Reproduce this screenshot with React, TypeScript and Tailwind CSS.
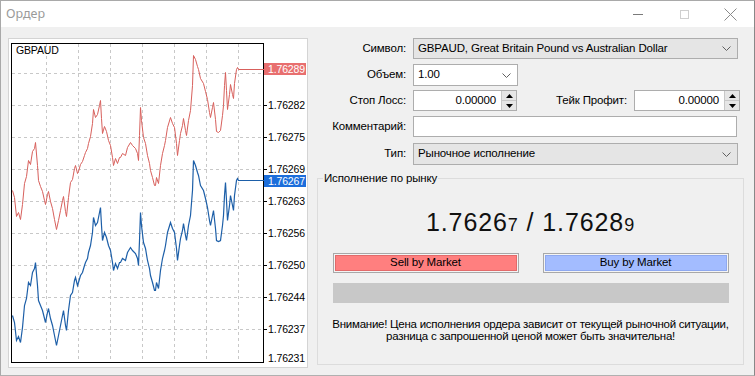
import React from "react";

const bluePts: [number, number][] = [
  [12,315],[14,322],[16,340],[18,336],[20,342],[22,327],[24,305],[26,298],[28,282],[30,285],[32,272],[34,268],[35,262],[37,285],[38,300],[40,305],[42,310],[44,318],[45,322],[47,312],[48,308],[50,318],[52,325],[54,335],[56,345],[58,335],[60,325],[62,315],[63,310],[65,325],[66,330],[68,310],[70,295],[72,292],[74,280],[75,277],[77,285],[78,282],[80,275],[82,272],[84,265],[85,262],[87,258],[88,252],[90,245],[92,232],[93,217],[95,225],[97,222],[99,212],[100,207],[101,225],[102,240],[104,232],[106,237],[108,245],[110,250],[112,262],[113,270],[115,263],[117,268],[119,262],[120,262],[122,258],[125,260],[127,252],[130,247],[132,250],[135,253],[137,258],[138,265],[139,240],[140,212],[141,225],[143,242],[145,248],[147,260],[149,268],[150,275],[152,282],[154,290],[155,290],[156,282],[158,288],[160,270],[162,258],[164,250],[165,245],[167,232],[170,222],[172,228],[174,232],[176,248],[177,260],[179,245],[180,238],[182,230],[183,223],[185,235],[186,240],[188,225],[190,215],[192,190],[193,160],[195,165],[197,172],[198,175],[200,185],[203,190],[205,198],[207,207],[209,220],[210,225],[212,215],[213,210],[215,228],[216,240],[218,241],[220,240],[222,225],[223,215],[224,195],[225,182],[226,200],[227,220],[229,205],[230,195],[232,205],[233,210],[234,195],[236,180],[237,178],[238,180],[264,180]
];

function toPath(pts: [number, number][], dy: (x: number) => number) {
  return pts.map((p, i) => `${i === 0 ? "M" : "L"}${p[0] + 0.5} ${Math.round(p[1] + dy(p[0])) + 0.5}`).join(" ");
}

const redOffset = (x: number) => {
  if (x < 60) return -125 + (x - 12) * (10 / 48);
  if (x < 110) return -115 + (x - 60) * (10 / 50);
  if (x < 190) return -105;
  if (x < 236) return -105 - (x - 190) * (7 / 46);
  return -111;
};

const gridY = [73, 105, 137, 169, 201, 233, 265, 297, 329];
const gridX = [46, 78, 110, 142, 174, 206, 238];
const labels: [number, string][] = [
  [105, "1.76282"], [137, "1.76275"], [169, "1.76269"], [201, "1.76263"],
  [233, "1.76256"], [265, "1.76250"], [297, "1.76244"], [329, "1.76237"], [358, "1.76231"],
];

function Chart() {
  return (
    <div className="w-[300px] h-[330px] shrink-0 bg-white border border-[#d4d4d4]">
      <svg width="298" height="328" viewBox="9 39 298 328" style={{ fontFamily: "'Liberation Sans', Arial, sans-serif" }}>
        {gridX.map((x) => (
          <line key={x} x1={x + 0.5} y1={44} x2={x + 0.5} y2={362} stroke="#c8c8c8" strokeDasharray="3 3" />
        ))}
        {gridY.map((y) => (
          <line key={y} x1={12} y1={y + 0.5} x2={263} y2={y + 0.5} stroke="#c8c8c8" strokeDasharray="3 3" />
        ))}
        {gridY.map((y) => (
          <line key={"t" + y} x1={264} y1={y + 0.5} x2={267} y2={y + 0.5} stroke="#000" />
        ))}
        <rect x={11.5} y={43.5} width={252} height={319} fill="none" stroke="#000" />
        <path d={toPath(bluePts, redOffset)} fill="none" stroke="#d8605c" strokeWidth={1} />
        <path d={toPath(bluePts, () => 0)} fill="none" stroke="#1d5fa8" strokeWidth={1.2} />
        {labels.map(([y, t]) => (
          <text key={t} x={268} y={y + 4} fontSize={10.5} fill="#000">{t}</text>
        ))}
        <rect x={264} y={63} width={42} height={12} fill="#e86f6f" />
        <text x={268} y={73} fontSize={10.5} fill="#fff">1.76289</text>
        <rect x={264} y={175} width={42} height={12} fill="#1c6edb" />
        <text x={268} y={185} fontSize={10.5} fill="#fff">1.76267</text>
        <text x={16} y={54} fontSize={10.5} fill="#000">GBPAUD</text>
      </svg>
    </div>
  );
}

function Chevron() {
  return (
    <svg width="9" height="5" viewBox="0 0 9 5" className="shrink-0">
      <path d="M0.5 0.5 L4.5 4.5 L8.5 0.5" fill="none" stroke="#606060" strokeWidth="1" />
    </svg>
  );
}

function Spinner() {
  return (
    <div className="w-[15px] h-full shrink-0 flex flex-col border-l border-[#c8c8c8] bg-[#f0f0f0]">
      <div className="flex-1 flex items-center justify-center border-b border-[#c8c8c8] bg-[#e6e6e6]">
        <svg width="7" height="4" viewBox="0 0 7 4"><path d="M0 4 L3.5 0 L7 4 Z" fill="#000" /></svg>
      </div>
      <div className="flex-1 flex items-center justify-center bg-[#e6e6e6]">
        <svg width="7" height="4" viewBox="0 0 7 4"><path d="M0 0 L3.5 4 L7 0 Z" fill="#000" /></svg>
      </div>
    </div>
  );
}

function Label({ children }: { children: React.ReactNode }) {
  return <div className="w-[96px] shrink-0 text-right whitespace-nowrap">{children}</div>;
}

export default function App() {
  return (
    <div className="w-[755px] h-[376px] overflow-hidden bg-[#f0f0f0] text-[11.5px] tracking-[-0.15px] text-[#000] font-['Liberation_Sans',Arial,sans-serif] flex flex-col border-t border-l border-[#a9a9a9] border-r border-r-[#888] border-b border-b-[#b0b0b0]">
      <div className="h-[26px] shrink-0 bg-white flex items-center">
        <div className="pl-[5px] text-[#9a9a9a] text-[12.5px] tracking-normal font-['Noto_Sans',sans-serif]">Ордер</div>
        <div className="ml-auto flex items-center h-full">
          <div className="w-[46px] h-full flex items-center justify-center">
            <div className="w-[10px] h-[1px] bg-[#7a7a7a]" />
          </div>
          <div className="w-[46px] h-full flex items-center justify-center">
            <div className="w-[9px] h-[9px] border border-[#cfcfcf]" />
          </div>
          <div className="w-[46px] h-full flex items-center justify-center mr-[1px]">
            <svg width="13" height="13" viewBox="0 0 13 13">
              <path d="M0.5 0.5 L12.5 12.5 M12.5 0.5 L0.5 12.5" stroke="#8a8a8a" strokeWidth="1" />
            </svg>
          </div>
        </div>
      </div>
      <div className="flex pt-[11px] pl-[7px]">
        <Chart />
        <div className="flex flex-col ml-[2px] w-[430px]">
          <div className="flex items-center h-[21px] gap-[7px]">
            <Label>Символ:</Label>
            <div className="w-[325px] h-[21px] bg-[#e5e5e5] border border-[#adadad] flex items-center pl-[4px] pr-[6px]">
              <span className="flex-1">GBPAUD, Great Britain Pound vs Australian Dollar</span>
              <Chevron />
            </div>
          </div>
          <div className="flex items-center h-[22px] gap-[7px] mt-[5px]">
            <Label>Объем:</Label>
            <div className="w-[105px] h-[22px] bg-white border border-[#adadad] flex items-center pl-[4px] pr-[6px]">
              <span className="flex-1">1.00</span>
              <Chevron />
            </div>
          </div>
          <div className="flex items-center h-[21px] gap-[7px] mt-[4px]">
            <Label>Стоп Лосс:</Label>
            <div className="w-[105px] h-[21px] bg-white border border-[#adadad] flex items-center">
              <span className="flex-1 text-right pr-[5px]">0.00000</span>
              <Spinner />
            </div>
            <div className="w-[104px] text-right whitespace-nowrap">Тейк Профит:</div>
            <div className="w-[107px] h-[21px] bg-white border border-[#adadad] flex items-center">
              <span className="flex-1 text-right pr-[5px]">0.00000</span>
              <Spinner />
            </div>
          </div>
          <div className="flex items-center h-[21px] gap-[7px] mt-[5px]">
            <Label>Комментарий:</Label>
            <div className="w-[324px] h-[21px] bg-white border border-[#adadad]" />
          </div>
          <div className="flex items-center h-[22px] gap-[7px] mt-[6px]">
            <Label>Тип:</Label>
            <div className="w-[325px] h-[22px] bg-[#e5e5e5] border border-[#adadad] flex items-center pl-[4px] pr-[6px]">
              <span className="flex-1">Рыночное исполнение</span>
              <Chevron />
            </div>
          </div>
          <div className="relative ml-[7px] mt-[13px] w-[427px] h-[187px] border border-[#dcdcdc] flex flex-col items-center">
            <div className="absolute left-[5px] top-[-8px] px-[1px] bg-[#f0f0f0] leading-[14px]">Исполнение по рынку</div>
            <div className="mt-[28px] h-[30px] flex items-baseline text-[25px] tracking-[0.9px] leading-[30px] text-[#111]">
              <span>1.7626</span><span className="text-[18px]">7</span><span>&nbsp;/ 1.7628</span><span className="text-[18px]">9</span>
            </div>
            <div className="mt-[16px] w-[396px] flex justify-between">
              <div className="w-[186px] h-[20px] border border-[#a8a8a8] p-[1px] bg-[#f4f4f4]">
                <div className="w-full h-full bg-[#ff7f7f] border border-[#e26a6a] flex items-center justify-center leading-none">Sell by Market</div>
              </div>
              <div className="w-[186px] h-[20px] border border-[#a8a8a8] p-[1px] bg-[#f4f4f4]">
                <div className="w-full h-full bg-[#a3bcff] border border-[#8ea8ef] flex items-center justify-center leading-none">Buy by Market</div>
              </div>
            </div>
            <div className="mt-[10px] w-[396px] h-[20px] bg-[#c8c8c8]" />
            <div className="mt-[15px] text-center leading-[12px] whitespace-nowrap tracking-[-0.25px]">
              Внимание! Цена исполнения ордера зависит от текущей рыночной ситуации,<br />
              разница с запрошенной ценой может быть значительна!
            </div>
          </div>
        </div>
      </div>
    </div>
  );
}
